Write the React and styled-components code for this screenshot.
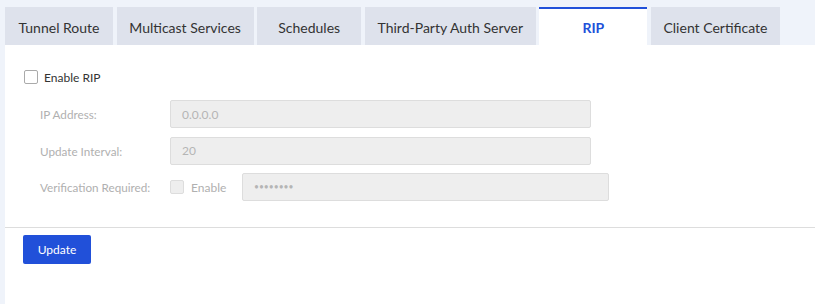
import React from "react";
import styled, { createGlobalStyle } from "styled-components";

const GlobalStyle = createGlobalStyle`
  body {
    margin: 0;
    background: #eff3fa;
    font-family: Lato, "Noto Sans", sans-serif;
  }
`;

const tabs = [
  { label: "Tunnel Route", width: 108 },
  { label: "Multicast Services", width: 137 },
  { label: "Schedules", width: 104 },
  { label: "Third-Party Auth Server", width: 171 },
  { label: "RIP", width: 108, active: true },
  { label: "Client Certificate", width: 129 },
];

const App = () => {
  return (
    <Page>
      <GlobalStyle />
      <TabBar>
        {tabs.map((t) => (
          <Tab key={t.label} $width={t.width} $active={t.active}>
            {t.label}
          </Tab>
        ))}
      </TabBar>

      <Panel>
        <Body>
          <CheckRow>
            <Box />
            <span>Enable RIP</span>
          </CheckRow>

          <Form>
            <Label>IP Address:</Label>
            <Field $width={421}>0.0.0.0</Field>

            <Label>Update Interval:</Label>
            <Field $width={421}>20</Field>

            <Label>Verification Required:</Label>
            <Inline>
              <Box $disabled />
              <DimText>Enable</DimText>
              <Field $width={367} $dots>
                ••••••••
              </Field>
            </Inline>
          </Form>
        </Body>

        <Footer>
          <Button>Update</Button>
        </Footer>
      </Panel>
    </Page>
  );
};

const Page = styled.div`
  padding-left: 5px;
  padding-top: 7px;
  height: 297px;
  display: flex;
  flex-direction: column;
`;

const TabBar = styled.div`
  display: flex;
  gap: 3.6px;
  height: 38px;
`;

const Tab = styled.div`
  width: ${(p) => p.$width}px;
  box-sizing: border-box;
  display: flex;
  align-items: center;
  justify-content: center;
  font-size: 14px;
  color: ${(p) => (p.$active ? "#2150d9" : "#333")};
  font-weight: ${(p) => (p.$active ? 700 : 400)};
  background: ${(p) => (p.$active ? "#fff" : "#dee2ec")};
  border-top: 2px solid ${(p) => (p.$active ? "#2150d9" : "transparent")};
`;

const Panel = styled.div`
  flex: 1;
  background: #fff;
  display: flex;
  flex-direction: column;
`;

const Body = styled.div`
  padding: 20px 0 26px 19px;
  border-bottom: 1px solid #dddddd;
`;

const CheckRow = styled.label`
  display: flex;
  align-items: center;
  gap: 6px;
  height: 24px;
  font-size: 12px;
  color: #333;
`;

const Box = styled.span`
  width: 12px;
  height: 12px;
  border: 1px solid ${(p) => (p.$disabled ? "#ddd" : "#aaa")};
  background: ${(p) => (p.$disabled ? "#eee" : "#fff")};
  border-radius: 2px;
  flex-shrink: 0;
`;

const Form = styled.div`
  display: grid;
  grid-template-columns: 130px auto;
  row-gap: 8.5px;
  padding-left: 16px;
  margin-top: 11px;
  align-items: center;
`;

const Label = styled.div`
  font-size: 11.7px;
  color: #b0b0b0;
`;

const Inline = styled.div`
  display: flex;
  align-items: center;
`;

const DimText = styled.span`
  font-size: 12px;
  color: #b0b0b0;
  margin-left: 7px;
  width: 51px;
`;

const Field = styled.div`
  width: ${(p) => p.$width}px;
  height: 28px;
  box-sizing: border-box;
  background: #eeeeee;
  border: 1px solid #dddddd;
  border-radius: 2px;
  padding-left: 11px;
  display: flex;
  align-items: center;
  font-size: ${(p) => (p.$dots ? "8.5px" : "12px")};
  color: #b5b5b5;
`;

const Footer = styled.div`
  padding: 7px 0 0 18px;
`;

const Button = styled.button`
  width: 68px;
  height: 29px;
  border: none;
  border-radius: 2px;
  background: #2150d9;
  color: #fff;
  font-family: inherit;
  font-size: 12px;
  cursor: pointer;
`;

export default App;
